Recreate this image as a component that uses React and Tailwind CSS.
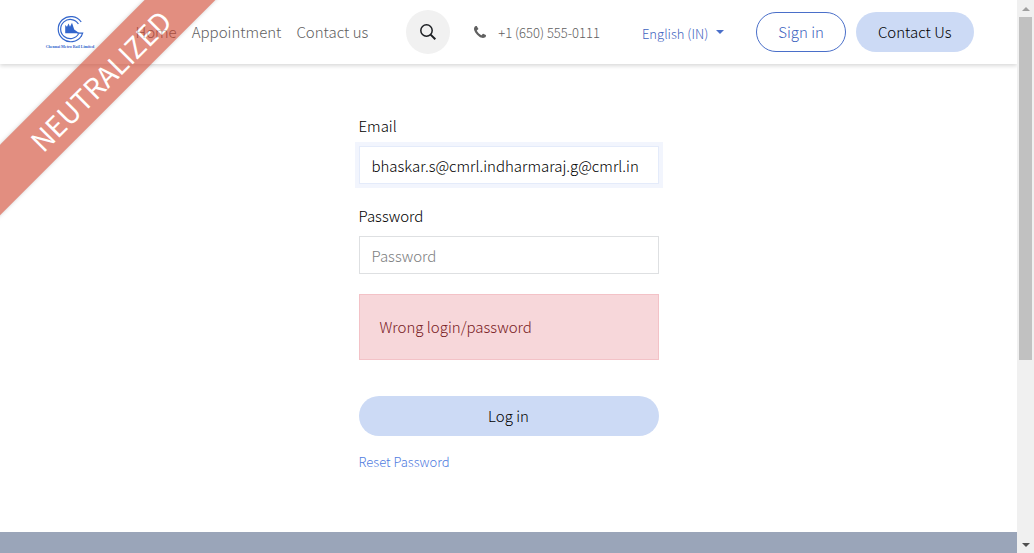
import React from "react";

function Logo() {
  return (
    <a href="#home" aria-label="Chennai Metro Rail Limited" className="block w-[52px] shrink-0">
      <svg viewBox="0 0 52 40" className="block h-10 w-full" aria-hidden="true">
        <g fill="none" stroke="#3366cc" strokeWidth="1.2">
          <path d="M37.2 10 A12.6 12.6 0 1 0 37.4 24" />
          <path d="M34.4 12 A9.6 9.6 0 1 0 34.6 21.8" />
          <path d="M33.4 21.2 H38.6 L37.2 24.4" />
        </g>
        <path fill="#3366cc" d="M21.2 21.2 V13 L23 14.8 L24.5 11.6 L26 14.8 L28 10.8 L30.2 17.4 L35.5 21.2 Z" />
        <text x="26" y="36" textAnchor="middle" fontSize="4" fontWeight="700" fontFamily="Liberation Serif, serif" fill="#3366cc">
          Chennai Metro Rail Limited
        </text>
      </svg>
    </a>
  );
}

function PhoneIcon() {
  return (
    <svg viewBox="0 0 1408 1408" className="size-3" fill="currentColor" aria-hidden="true">
      <path d="M1408 1112q0 27-10 70.5t-21 68.5q-21 50-122 106-94 51-186 51-27 0-53-3.5t-57-12.5-47-14.5-55.5-20.5-49.5-18q-98-35-175-83-127-79-264-216t-216-264q-48-77-83-175-3-9-18-49.5t-20.5-55.5-14.5-47-12.5-57-3.5-53q0-92 51-186 56-101 106-122 25-11 68.5-21t70.5-10q14 0 21 3 18 6 53 76 11 19 30 54t35 63.5 31 53.5q3 4 17.5 25t21.5 35.5 7 28.5q0 20-28.5 50t-62 55-62 53-28.5 46q0 9 5 22.5t8.5 20.5 14 24 11.5 19q76 137 174 235t235 174q2 1 19 11.5t24 14 20.5 8.5 22.5 5q18 0 46-28.5t53-62 55-62 50-28.5q14 0 28.5 7t35.5 21.5 25 17.5q25 15 53.5 31t63.5 35 54 30q70 35 76 53 3 7 3 21z" />
    </svg>
  );
}

function Header() {
  return (
    <header className="bg-white shadow-[0_2px_4px_rgba(0,0,0,0.15)]">
      <div className="mx-auto flex h-16 max-w-[960px] items-center px-[15px]">
        <Logo />
        <nav className="ml-10 flex gap-[15px] whitespace-nowrap text-[#606060]">
          <a href="#home">Home</a>
          <a href="#appointment">Appointment</a>
          <a href="#contact">Contact us</a>
        </nav>
        <div className="ml-auto flex items-center whitespace-nowrap">
          <button type="button" aria-label="Search" className="flex size-11 items-center justify-center rounded-full bg-[#f1f1f1] text-[#1c1f23]">
            <svg viewBox="0 0 16 16" className="size-4" fill="none" stroke="currentColor" strokeWidth="1.5" aria-hidden="true">
              <circle cx="6.5" cy="6.5" r="5.7" />
              <path d="M10.6 10.6 L15.3 15.3" strokeWidth="2" />
            </svg>
          </button>
          <a href="tel:+16505550111" className="ml-6 flex items-center gap-3 text-[13px] text-[#606060]">
            <PhoneIcon />
            <span className="pt-0.5">+1 (650) 555-0111</span>
          </a>
          <button type="button" className="ml-[42px] flex items-center gap-2 text-[13px] text-[#3f64c0]">
            <span className="pt-1">English (IN)</span>
            <span className="border-x-4 border-t-4 border-x-transparent border-t-[#4a6fc9]" />
          </button>
          <a href="#signin" className="ml-8 flex h-10 items-center rounded-full border border-[#4a6fc9] px-[21px] text-[#3f64c0]">
            Sign in
          </a>
          <a href="#contact" className="ml-[10px] flex h-10 items-center rounded-full bg-[#ccdaf5] px-[22px] text-black">
            Contact Us
          </a>
        </div>
      </div>
    </header>
  );
}

function LoginForm() {
  return (
    <form className="mx-auto flex w-[300px] flex-col pt-[50px] pb-[60px]">
      <label htmlFor="email" className="mb-2">Email</label>
      <input
        id="email"
        type="text"
        defaultValue="bhaskar.s@cmrl.indharmaraj.g@cmrl.in"
        className="h-[38px] border border-[#e4ebfa] px-3 shadow-[0_0_0_4px_#f2f5fd] outline-none"
      />
      <label htmlFor="password" className="mt-5 mb-2">Password</label>
      <input
        id="password"
        type="password"
        placeholder="Password"
        className="h-[38px] border border-[#dee0e2] px-3 outline-none placeholder:text-[#7c7e80]"
      />
      <p role="alert" className="mt-5 border border-[#f3c2c7] bg-[#f7d7da] p-5 text-[#781a23]">
        Wrong login/password
      </p>
      <button type="button" className="mt-9 h-10 rounded-full bg-[#ccdaf5]">Log in</button>
      <a href="#reset" className="mt-4 self-start text-[13px] leading-5 text-[#4f7be0]">Reset Password</a>
    </form>
  );
}

function Scrollbar() {
  return (
    <div aria-hidden="true" className="flex w-[17px] shrink-0 flex-col items-center bg-[#f0f0f0]">
      <div className="flex h-[17px] items-center">
        <span className="border-x-4 border-b-4 border-x-transparent border-b-[#a0a0a0]" />
      </div>
      <div className="flex-1">
        <div className="h-[66%] w-[13px] bg-[#c1c1c1]" />
      </div>
      <div className="flex h-[17px] items-center">
        <span className="border-x-4 border-t-4 border-x-transparent border-t-[#505050]" />
      </div>
    </div>
  );
}

export default function App() {
  return (
    <div className="relative flex h-screen overflow-hidden bg-white font-['Noto_Sans_CJK_SC',sans-serif] text-[15px] leading-6 font-light text-black">
      <div className="flex min-w-0 flex-1 flex-col">
        <Header />
        <main>
          <LoginForm />
        </main>
        <footer className="flex-1 bg-[#9aa5b9]" />
      </div>
      <Scrollbar />
      <div className="pointer-events-none absolute top-[55px] left-[-100px] flex h-[50px] w-[400px] -rotate-45 items-center justify-center bg-[#d0442c] text-[28px] font-normal text-white opacity-60 shadow-[0_0_4px_rgba(0,0,0,0.3)]">
        NEUTRALIZED
      </div>
    </div>
  );
}
